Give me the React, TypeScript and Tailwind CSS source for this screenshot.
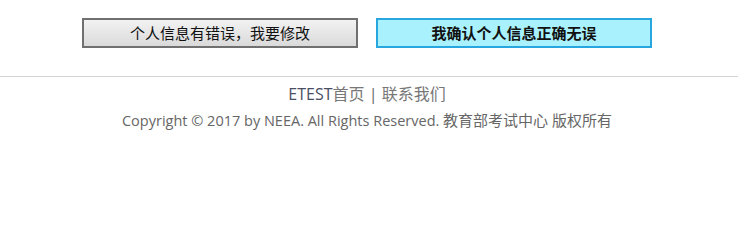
export default function App() {
  return (
    <div className="w-[738px] h-[228px] bg-white" style={{ fontFamily: '"Open Sans", "Noto Sans CJK SC", sans-serif' }}>
      {/* confirm buttons */}
      <div className="flex justify-center gap-[18px] pt-[18px] pr-[4px]">
        <button className="w-[276px] h-[30px] border-2 border-[#707070] bg-gradient-to-b from-[#f2f2f2] to-[#dadada] text-[15px] text-[#111] leading-none">
          个人信息有错误，我要修改
        </button>
        <button className="w-[276px] h-[30px] border-2 border-[#27a6e0] bg-[#a9f2fd] text-[15px] font-bold text-[#111] leading-none">
          我确认个人信息正确无误
        </button>
      </div>

      <div className="mt-[28px] border-t border-[#d4d4d4] h-px bg-[#ececec]" />

      {/* footer */}
      <div className="pt-[6px] text-center pr-[4px]">
        <p className="text-[16px] leading-[22px] text-[#666]">
          <a className="text-[#4a4f63]">ETEST</a>
          <a className="text-[#777]">首页</a>
          <span className="text-[#666]"> | </span>
          <a className="text-[#777]">联系我们</a>
        </p>
        <p className="mt-[5px] text-[14.5px] leading-[20px] text-[#666]">
          Copyright © 2017 by NEEA. All Rights Reserved. <span className="text-[15px]">教育部考试中心 版权所有</span>
        </p>
      </div>
    </div>
  );
}
